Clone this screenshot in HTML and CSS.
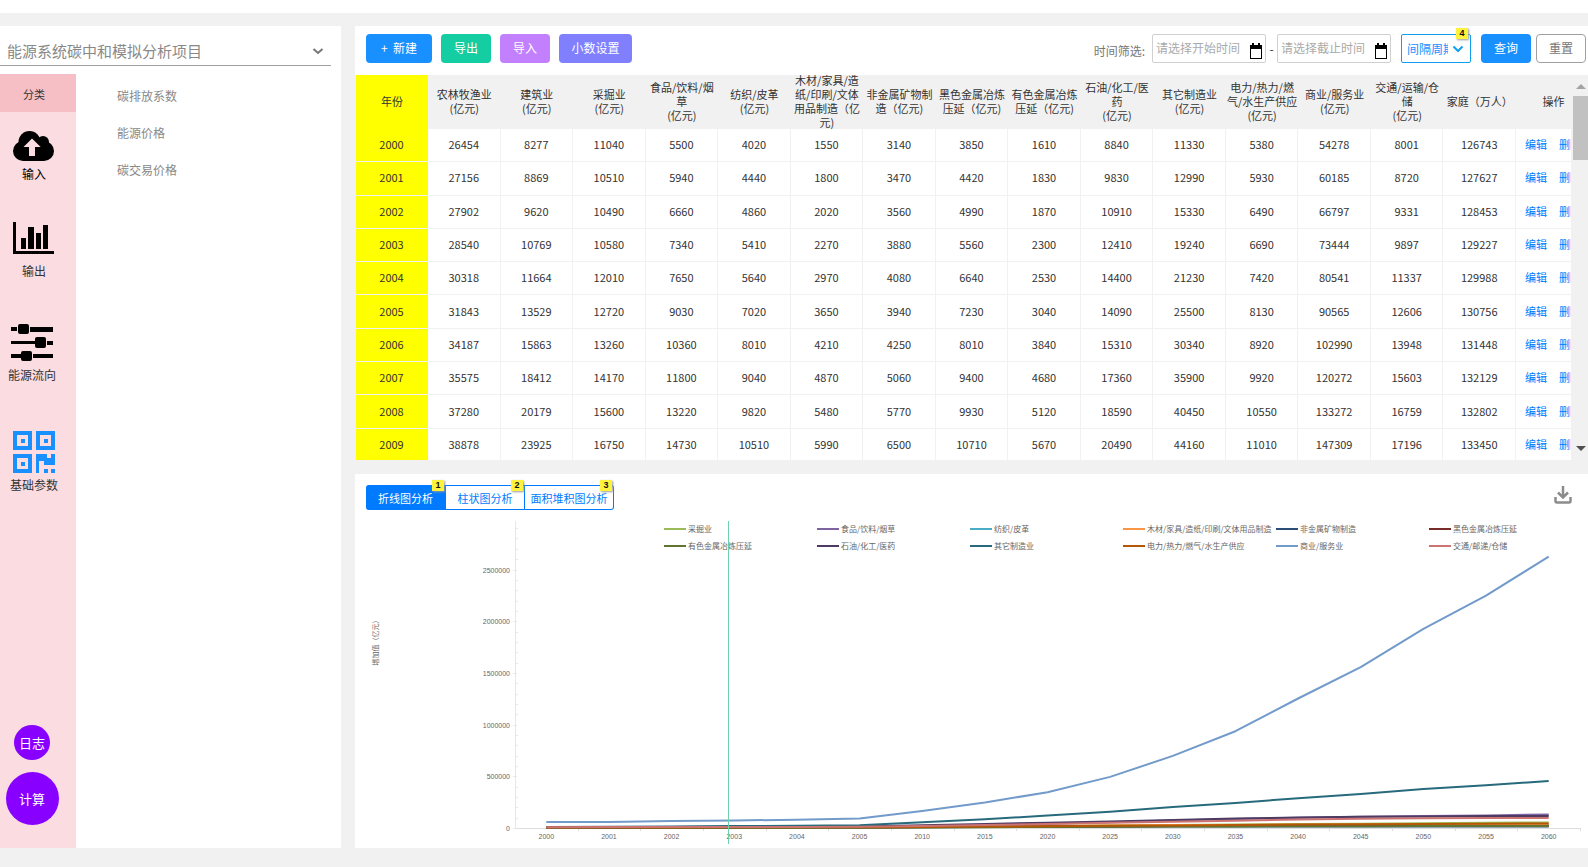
FILE: index.html
```html
<!DOCTYPE html>
<html lang="zh-CN">
<head>
<meta charset="utf-8">
<title>能源系统碳中和模拟分析项目</title>
<link rel="stylesheet" href="styles.css">
</head>
<body>
<div class="layout">
  <aside class="side">
    <button class="project" type="button">
      <span>能源系统碳中和模拟分析项目</span>
      <svg width="12" height="8" viewBox="0 0 12 8"><path d="M1.5 2 6 6l4.500-4" fill="none" stroke="#777" stroke-width="2"/></svg>
    </button>
    <div class="side-body">
      <nav class="rail">
        <div class="rail-title">分类</div>
        <a class="rail-item input" href="#input">
          <svg width="42" height="42" viewBox="0 0 42 42"><g fill="#000"><circle cx="10" cy="31" r="10"/><circle cx="16.500" cy="22" r="11"/><circle cx="30" cy="22" r="6"/><circle cx="31" cy="31" r="10"/><rect x="10" y="22" width="21" height="19"/></g><path d="M19 18.500l8.700 8.500H22v9h-6v-9h-5.500z" fill="#fadce1"/></svg>
          <span>输入</span>
        </a>
        <a class="rail-item output" href="#output">
          <svg width="42" height="42" viewBox="0 0 42 42"><path d="M0 5h3v29h38v3H0zM8 21h5v11H8zM15 10h6v22h-6zM23 16h5v16h-5zM30 8h5v24h-5z"/></svg>
          <span>输出</span>
        </a>
        <a class="rail-item flow" href="#flow">
          <svg width="42" height="42" viewBox="0 0 42 42"><path d="M0 6h6v4H0zM19 6h23v5H19zM0 20h24v3H0zM36 20h6v4h-6zM0 33h10v4H0zM22 33h20v4H22z"/><rect x="7" y="3" width="11" height="10" rx="2"/><rect x="24" y="16" width="11" height="11" rx="2"/><rect x="10" y="30" width="11" height="10" rx="2"/></svg>
          <span>能源流向</span>
        </a>
        <a class="rail-item params" href="#params">
          <svg width="42" height="42" viewBox="0 0 42 42"><g fill="none" stroke="#1890ff" stroke-width="4"><rect x="2" y="2" width="15" height="15"/><rect x="25" y="2" width="15" height="15"/><rect x="2" y="25" width="15" height="15"/></g><path fill="#1890ff" d="M8 8h4v4H8zM31 8h4v4h-4zM8 31h4v4H8zM23 23h11v4h4v-4h4v11H31v-4h-5v12h-3zM31 38h4v4h-4zM38 38h4v4h-4z"/></svg>
          <span>基础参数</span>
        </a>
        <div class="rail-actions">
          <button class="round small" type="button">日志</button>
          <button class="round large" type="button">计算</button>
        </div>
      </nav>
      <nav class="submenu">
        <a href="#emission">碳排放系数</a>
        <a href="#energy-price">能源价格</a>
        <a href="#carbon-price">碳交易价格</a>
      </nav>
    </div>
  </aside>

  <main class="content">
    <section class="card">
      <div class="toolbar">
        <div class="actions">
          <button class="btn new" type="button">+&nbsp; 新建</button>
          <button class="btn export" type="button">导出</button>
          <button class="btn import" type="button">导入</button>
          <button class="btn decimals" type="button">小数设置</button>
        </div>
        <form class="filters">
          <label class="filter-label" for="start">时间筛选:</label>
          <div class="date">
            <input id="start" type="text" placeholder="请选择开始时间">
            <svg width="12" height="16" viewBox="0 0 12 16"><path d="M2 0h2v2h4V0h2v2h2v14H0V2h2zM1 6v9h10V6z" fill-rule="evenodd"/></svg>
          </div>
          <label class="dash" for="end">-</label>
          <div class="date">
            <input id="end" type="text" placeholder="请选择截止时间">
            <svg width="12" height="16" viewBox="0 0 12 16"><path d="M2 0h2v2h4V0h2v2h2v14H0V2h2zM1 6v9h10V6z" fill-rule="evenodd"/></svg>
          </div>
          <div class="period">
            <select aria-label="间隔周期"><option>间隔周期</option></select>
            <svg width="12" height="8" viewBox="0 0 12 8"><path d="M1.500 1.500 6 6l4.500-4.500" fill="none" stroke="#0ea0ee" stroke-width="2"/></svg>
            <span class="badge">4</span>
          </div>
          <button class="btn query" type="button">查询</button>
          <button class="btn reset" type="button">重置</button>
        </form>
      </div>
      <div class="table-area">
        <div class="table-clip">
          <table class="data">
            <colgroup id="cols"></colgroup>
            <thead><tr id="head"></tr></thead>
            <tbody id="rows"></tbody>
          </table>
        </div>
        <div class="scrollbar">
          <svg width="10" height="5" viewBox="0 0 10 5"><path d="M0 5 5 0l5 5z" fill="#a3a3a3"/></svg>
          <div class="thumb"></div>
          <svg class="down" width="10" height="5" viewBox="0 0 10 5"><path d="M0 0h10L5 5z" fill="#505050"/></svg>
        </div>
      </div>
    </section>

    <section class="card chart-card">
      <div class="chart-head">
        <div class="tabs">
          <button class="tab active" type="button">折线图分析<span class="badge">1</span></button>
          <button class="tab" type="button">柱状图分析<span class="badge">2</span></button>
          <button class="tab wide" type="button">面积堆积图分析<span class="badge">3</span></button>
        </div>
        <button class="download" type="button" aria-label="下载">
          <svg width="18" height="18" viewBox="0 0 18 18"><path d="M9 0v11M4 6.500l5 5 5-5M1.500 11v4q0 1.500 1.500 1.500h12q1.500 0 1.500-1.500v-4" fill="none" stroke="#8c8c8c" stroke-width="2.500"/></svg>
        </button>
      </div>
      <svg class="chart" id="chart" viewBox="0 0 1233 330"></svg>
    </section>
  </main>
</div>
<script src="app.js"></script>
</body>
</html>
```

FILE: styles.css
```css
* { box-sizing: border-box; }
body {
  margin: 0;
  background: #f1f1f1;
  color: #333;
  font: 12px/18px "Noto Sans CJK SC", sans-serif;
}
button, input, select { font: inherit; margin: 0; padding: 0; border: 0; }
a { text-decoration: none; color: inherit; }
svg { display: block; }

.layout {
  display: flex;
  gap: 14px;
  min-height: 100vh;
  padding: 13px 0 19px;
  border-top: 13px solid #fff;
}

.side { flex: none; width: 341px; background: #fff; display: flex; flex-direction: column; }
.project {
  display: flex;
  align-items: center;
  justify-content: space-between;
  width: 331px;
  height: 40px;
  padding: 10px 7px 0;
  background: none;
  border-bottom: 1px solid #a0a0a0;
  color: #888;
  font-size: 15px;
}
.side-body { flex: 1; display: flex; margin-top: 8px; }
.rail {
  width: 76px;
  display: flex;
  flex-direction: column;
  background: #fadce1;
  padding-bottom: 23px;
}
.rail-title {
  height: 38px;
  padding: 11px 8px 0 0;
  background: #f6bfc6;
  text-align: center;
  font-size: 11px;
}
.rail-item {
  display: flex;
  flex-direction: column;
  align-items: center;
  gap: 3px;
  padding-right: 8px;
}
.input { margin-top: 8px; color: #000; }
.output { margin-top: 34px; }
.flow { margin-top: 41px; padding-right: 12px; }
.params { margin-top: 47px; }
.rail-actions {
  margin-top: auto;
  display: flex;
  flex-direction: column;
  align-items: center;
  gap: 12px;
  padding-right: 12px;
}
.round { border-radius: 50%; background: #80f; color: #fff; font-size: 13px; }
.small { width: 36px; height: 35px; }
.large { width: 53px; height: 53px; }
.submenu {
  display: flex;
  flex-direction: column;
  gap: 19px;
  padding: 13px 0 0 41px;
  color: #888;
}

.content { flex: 1; min-width: 0; display: flex; flex-direction: column; gap: 14px; }
.card { background: #fff; }
.toolbar {
  display: flex;
  justify-content: space-between;
  padding: 8px 2px 12px 11px;
}
.actions { display: flex; gap: 9px; }
.btn { width: 50px; height: 29px; padding-bottom: 2px; border-radius: 4px; color: #fff; }
.new { width: 66px; background: #1890ff; }
.export { background: #14cda2; }
.import { background: #c280ff; }
.decimals { width: 73px; background: #8080ff; }
.query { background: #1890ff; }
.filters { display: flex; align-items: center; }
.filter-label { color: #777; padding: 4px 7px 0 0; }
.dash { width: 11px; text-align: center; }
.date, .period { position: relative; }
.date input {
  width: 114px;
  height: 29px;
  padding: 0 3px 2px;
  border: 1px solid #d0d0d0;
  border-radius: 2px;
  background: #fff;
}
.date input::placeholder { color: #aaa; opacity: 1; }
.date svg { position: absolute; right: 4px; top: 9px; }
.period { margin: 0 10px; }
.period select {
  appearance: none;
  display: block;
  width: 70px;
  height: 29px;
  padding: 0 22px 0 5px;
  border: 1px solid #0ea0ee;
  border-radius: 2px;
  background: #fff;
  color: #1890ff;
}
.period svg { position: absolute; right: 7px; top: 11px; }
.badge {
  position: absolute;
  right: 3px;
  top: -6px;
  width: 12px;
  height: 11px;
  background: #fff23c;
  box-shadow: 1px 1px 2px #999;
  color: #111;
  font: bold 9px/11px "Liberation Sans", sans-serif;
  text-align: center;
}
.tab .badge { right: 1px; }
.reset { margin-left: 5px; background: #fff; border: 1px solid #a0a0a0; color: #777; }

.table-area { display: flex; height: 385px; background: #f1f1f1; }
.table-clip { flex: 1; min-width: 0; overflow: hidden; padding-left: 1px; }
.data {
  width: calc(100% + 20px);
  height: 387px;
  table-layout: fixed;
  border-collapse: separate;
  border-spacing: 0;
  background: #fff;
  font-size: 11px;
  line-height: 14px;
  text-align: center;
}
.col-year { width: 72px; }
.col-ops { width: 75px; }
.data th { height: 54px; padding: 0; background: #f1f1f1; font-weight: normal; }
.data th div {
  height: 53px;
  padding-bottom: 2px;
  display: flex;
  align-items: center;
  justify-content: center;
  white-space: pre;
}
.data td {
  height: 33px;
  padding: 0 0 2px;
  border-right: 1px solid #f1f1f1;
  border-bottom: 1px solid #f1f1f1;
}
.data .year { background: #ff0; border-right-color: #ff0; }
.data .ops { white-space: nowrap; color: #007bff; }
.ops a + a { margin-left: 12px; }
.scrollbar {
  flex: none;
  width: 17px;
  display: flex;
  flex-direction: column;
  align-items: center;
  padding: 9px 0 9px 2px;
}
.thumb { width: 15px; height: 64px; margin-top: 7px; background: #c1c1c1; }
.down { margin-top: auto; }

.chart-card { padding-top: 11px; }
.chart-head { display: flex; justify-content: space-between; padding: 0 16px 8px 11px; }
.tabs { display: flex; }
.tab {
  position: relative;
  width: 79px;
  height: 25px;
  background: #fff;
  border: 1px solid #007bff;
  border-left-width: 0;
  color: #007bff;
  font-size: 11px;
}
.tab:first-child { width: 80px; border-radius: 3px 0 0 3px; }
.tab:last-child { border-radius: 0 3px 3px 0; }
.tab.wide { width: 89px; }
.tab.active { background: #007bff; color: #fff; }
.download { background: none; align-self: flex-start; padding-top: 1px; }
.chart { width: 100%; height: auto; }
.chart text { fill: #666; font-size: 8px; }
.chart .num { font-family: "Liberation Sans", sans-serif; font-size: 7px; }
.chart .name { font-size: 7px; }
```

FILE: app.js
```js
const heads = ['年份', '农林牧渔业\n(亿元)', '建筑业\n(亿元)', '采掘业\n(亿元)', '食品/饮料/烟\n草\n(亿元)', '纺织/皮革\n(亿元)',
  '木材/家具/造\n纸/印刷/文体\n用品制造（亿\n元)', '非金属矿物制\n造（亿元)', '黑色金属冶炼\n压延（亿元)', '有色金属冶炼\n压延（亿元)',
  '石油/化工/医\n药\n(亿元)', '其它制造业\n(亿元)', '电力/热力/燃\n气/水生产供应\n(亿元)', '商业/服务业\n(亿元)', '交通/运输/仓\n储\n(亿元)', '家庭（万人）', '操作'];
const data = [
  [2000, 26454, 8277, 11040, 5500, 4020, 1550, 3140, 3850, 1610, 8840, 11330, 5380, 54278, 8001, 126743],
  [2001, 27156, 8869, 10510, 5940, 4440, 1800, 3470, 4420, 1830, 9830, 12990, 5930, 60185, 8720, 127627],
  [2002, 27902, 9620, 10490, 6660, 4860, 2020, 3560, 4990, 1870, 10910, 15330, 6490, 66797, 9331, 128453],
  [2003, 28540, 10769, 10580, 7340, 5410, 2270, 3880, 5560, 2300, 12410, 19240, 6690, 73444, 9897, 129227],
  [2004, 30318, 11664, 12010, 7650, 5640, 2970, 4080, 6640, 2530, 14400, 21230, 7420, 80541, 11337, 129988],
  [2005, 31843, 13529, 12720, 9030, 7020, 3650, 3940, 7230, 3040, 14090, 25500, 8130, 90565, 12606, 130756],
  [2006, 34187, 15863, 13260, 10360, 8010, 4210, 4250, 8010, 3840, 15310, 30340, 8920, 102990, 13948, 131448],
  [2007, 35575, 18412, 14170, 11800, 9040, 4870, 5060, 9400, 4680, 17360, 35900, 9920, 120272, 15603, 132129],
  [2008, 37280, 20179, 15600, 13220, 9820, 5480, 5770, 9930, 5120, 18590, 40450, 10550, 133272, 16759, 132802],
  [2009, 38878, 23925, 16750, 14730, 10510, 5990, 6500, 10710, 5670, 20490, 44160, 11010, 147309, 17196, 133450]
];
document.getElementById('cols').innerHTML = heads.map((h, i) =>
  `<col${i === 0 ? ' class="col-year"' : i === heads.length - 1 ? ' class="col-ops"' : ''}>`).join('');
document.getElementById('head').innerHTML = heads.map((h, i) =>
  `<th scope="col"${i ? '' : ' class="year"'}><div>${h}</div></th>`).join('');
document.getElementById('rows').innerHTML = data.map(r =>
  '<tr>' + r.map((v, i) => `<td${i ? '' : ' class="year"'}>${v}</td>`).join('') +
  '<td class="ops"><a href="#edit">编辑</a><a href="#delete">删除</a></td></tr>').join('');

// Added value per sector, in thousands
const years = [2000, 2001, 2002, 2003, 2004, 2005, 2010, 2015, 2020, 2025, 2030, 2035, 2040, 2045, 2050, 2055, 2060];
const series = [
  ['采掘业', '#9bbb59', [11, 11, 10, 11, 12, 13, 14, 17, 20, 25, 30, 35, 38, 42, 46, 51, 54]],
  ['食品/饮料/烟草', '#8064a2', [6, 6, 7, 7, 8, 9, 18, 30, 42, 56, 72, 87, 99, 109, 116, 122, 132]],
  ['纺织/皮革', '#4bacc6', [4, 4, 5, 5, 6, 7, 11, 14, 17, 20, 22, 24, 25, 26, 27, 28, 28]],
  ['木材/家具/造纸/印刷/文体用品制造', '#f79646', [2, 2, 2, 2, 3, 4, 7, 12, 18, 24, 28, 30, 32, 34, 35, 36, 36]],
  ['非金属矿物制造', '#2c4d75', [3, 3, 4, 4, 4, 4, 7, 10, 12, 13, 14, 14, 14, 14, 14, 14, 14]],
  ['黑色金属冶炼压延', '#772c2a', [4, 4, 5, 6, 7, 7, 11, 13, 15, 17, 18, 19, 19, 19, 19, 19, 19]],
  ['有色金属冶炼压延', '#5f7530', [2, 2, 2, 2, 3, 3, 6, 8, 10, 12, 14, 15, 16, 17, 18, 18, 18]],
  ['石油/化工/医药', '#4d3b62', [9, 10, 11, 12, 14, 14, 27, 40, 50, 62, 78, 91, 101, 108, 112, 116, 117]],
  ['其它制造业', '#276a7c', [11, 13, 15, 19, 21, 26, 55, 84, 120, 158, 204, 243, 287, 330, 378, 413, 455]],
  ['电力/热力/燃气/水生产供应', '#b65708', [5, 6, 6, 7, 7, 8, 11, 14, 17, 21, 25, 30, 34, 37, 40, 42, 44]],
  ['商业/服务业', '#729aca', [58, 59, 67, 73, 80, 93, 165, 248, 345, 494, 697, 936, 1252, 1555, 1926, 2248, 2625]],
  ['交通/邮递/仓储', '#cd7371', [8, 9, 9, 10, 11, 13, 20, 28, 38, 50, 60, 70, 82, 90, 94, 96, 98]]
];
const left = 160, right = 1225, base = 310, top0 = 3;
const step = (right - left) / years.length;
const yOf = v => base - v * 0.1034;
let s = `<path d="M${left}.5 ${top0}V${base}" stroke="#e8e8e8"/><path d="M${left} ${base}.5H${right}" stroke="#ddd"/>`;
for (let v = 0; v <= 2900; v += 100) {
  const y = Math.round(yOf(v)) + 0.5;
  if (v % 500 === 0) {
    s += `<path d="M${left - 2} ${y}h4" stroke="#e8e8e8"/><text class="num" x="155" y="${y + 2}" text-anchor="end">${v * 1000}</text>`;
  } else {
    s += `<path d="M${left} ${y}h3" stroke="#e8e8e8"/>`;
  }
}
years.forEach((yr, i) => {
  const x = left + step * (i + 0.5);
  s += `<path d="M${Math.round(x + step / 2)}.5 ${base}v3" stroke="#ddd"/><text class="num" x="${x}" y="321" text-anchor="middle">${yr}</text>`;
});
series.forEach(([name, color, vals], k) => {
  const pts = vals.map((v, i) => `${(left + step * (i + 0.5)).toFixed(1)},${yOf(v).toFixed(1)}`).join(' ');
  s += `<polyline points="${pts}" fill="none" stroke="${color}" stroke-width="2" stroke-linejoin="round"/>`;
  const x = 309 + (k % 6) * 153, y = k < 6 ? 11 : 28;
  s += `<path d="M${x} ${y}h22" stroke="${color}" stroke-width="2"/><text x="${x + 24}" y="${y + 3}">${name}</text>`;
});
s += '<text class="name" transform="translate(23 123) rotate(-90)" text-anchor="middle">增加值（亿元）</text>';
s += '<path d="M373.5 3v323" stroke="#6fd0ac"/>';
document.getElementById('chart').innerHTML = s;
```
